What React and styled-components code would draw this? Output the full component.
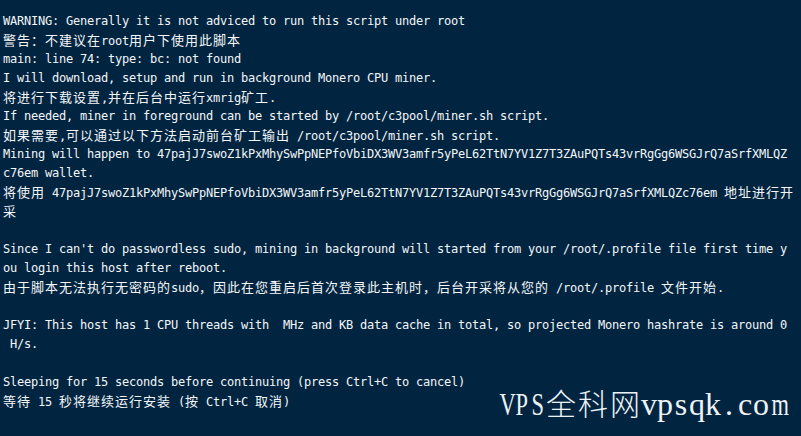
import React from "react";
import styled, { createGlobalStyle } from "styled-components";

const Global = createGlobalStyle`
  html, body { margin: 0; padding: 0; background: #012541; }
  #root { width: 801px; height: 436px; }
`;

const Screen = styled.div`
  position: relative;
  width: 801px;
  height: 436px;
  box-sizing: border-box;
  padding: 11px 0 0 3px;
  background: #012541;
  color: #f4f6f8;
  overflow: hidden;
  display: flex;
  flex-direction: column;
`;

const Line = styled.div`
  height: 19px;
  line-height: 20px;
  white-space: pre;
  font-family: "DejaVu Sans Mono", "Liberation Mono", monospace;
  font-size: 12px;
  letter-spacing: -0.224px;
`;

const Wide = styled.span`
  font-family: "Noto Sans CJK SC", "Noto Sans", sans-serif;
  font-size: 13px;
  letter-spacing: 1px;
`;

const Watermark = styled.div`
  position: absolute;
  left: 497px;
  top: 386px;
  display: flex;
  align-items: baseline;
  color: #eef2f6;
  font-family: "Liberation Serif", "Noto Sans CJK SC", serif;
  font-size: 32px;
  line-height: 32px;
  white-space: pre;
`;

const Half = styled.span`
  display: inline-block;
  width: 16px;
  text-align: center;
  transform: scaleX(${(p) => (p.$narrow ? 0.7 : 1)});
`;

const Full = styled.span`
  display: inline-block;
  width: 32px;
  text-align: center;
  font-family: "Noto Sans CJK SC", sans-serif;
  font-weight: 300;
  font-size: 30px;
`;

const lines = [
  "WARNING: Generally it is not adviced to run this script under root",
  "警告：不建议在root用户下使用此脚本",
  "main: line 74: type: bc: not found",
  "I will download, setup and run in background Monero CPU miner.",
  "将进行下载设置,并在后台中运行xmrig矿工.",
  "If needed, miner in foreground can be started by /root/c3pool/miner.sh script.",
  "如果需要,可以通过以下方法启动前台矿工输出 /root/c3pool/miner.sh script.",
  "Mining will happen to 47pajJ7swoZ1kPxMhySwPpNEPfoVbiDX3WV3amfr5yPeL62TtN7YV1Z7T3ZAuPQTs43vrRgGg6WSGJrQ7aSrfXMLQZ",
  "c76em wallet.",
  "将使用 47pajJ7swoZ1kPxMhySwPpNEPfoVbiDX3WV3amfr5yPeL62TtN7YV1Z7T3ZAuPQTs43vrRgGg6WSGJrQ7aSrfXMLQZc76em 地址进行开",
  "采",
  "",
  "Since I can't do passwordless sudo, mining in background will started from your /root/.profile file first time y",
  "ou login this host after reboot.",
  "由于脚本无法执行无密码的sudo，因此在您重启后首次登录此主机时，后台开采将从您的 /root/.profile 文件开始.",
  "",
  "JFYI: This host has 1 CPU threads with  MHz and KB data cache in total, so projected Monero hashrate is around 0",
  " H/s.",
  "",
  "Sleeping for 15 seconds before continuing (press Ctrl+C to cancel)",
  "等待 15 秒将继续运行安装 (按 Ctrl+C 取消)",
];

const WIDE_RE = /([\u3000-\u9fff\uff00-\uffef]+)/;

function renderLine(text) {
  return text
    .split(WIDE_RE)
    .filter((p) => p !== "")
    .map((part, i) =>
      WIDE_RE.test(part) ? <Wide key={i}>{part}</Wide> : <React.Fragment key={i}>{part}</React.Fragment>
    );
}

const mark = "VPS全科网vpsqk.com";

export default function App() {
  return (
    <>
      <Global />
      <Screen>
        {lines.map((l, i) => (
          <Line key={i}>{renderLine(l)}</Line>
        ))}
        <Watermark>
          {Array.from(mark).map((ch, i) =>
            /[\u3000-\u9fff]/.test(ch) ? (
              <Full key={i}>{ch}</Full>
            ) : (
              <Half key={i} $narrow={/[A-Zmw]/.test(ch)}>{ch}</Half>
            )
          )}
        </Watermark>
      </Screen>
    </>
  );
}
